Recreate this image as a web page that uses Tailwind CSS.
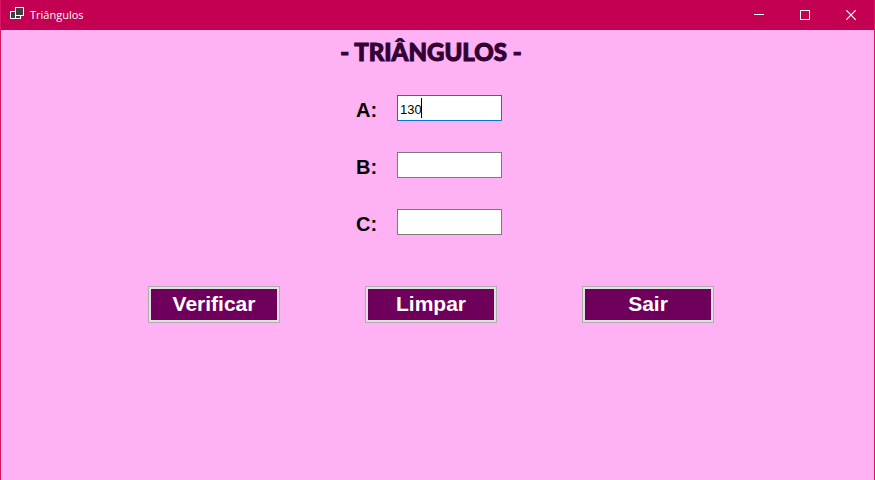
<!DOCTYPE html>
<html lang="pt-BR">
<head>
<meta charset="utf-8">
<meta name="viewport" content="width=device-width, initial-scale=1">
<title>Triângulos</title>
<script src="https://cdn.jsdelivr.net/npm/@tailwindcss/browser@4"></script>
</head>
<body class="flex min-h-screen flex-col border-x border-[#dc1464] bg-[#ffb2f3] font-['Liberation_Sans',Arial,sans-serif] text-black">
  <header class="flex h-[30px] items-center justify-between bg-[#c30052] text-white">
    <div class="flex items-center gap-1.5 pl-[9px]">
      <svg class="h-4 w-[14px]" viewBox="0 0 14 16" shape-rendering="crispEdges" aria-hidden="true">
        <rect x="0.5" y="4.5" width="5" height="7" fill="#404040" stroke="#fff"/>
        <rect x="5.5" y="8.5" width="5" height="3" fill="#404040" stroke="#fff"/>
        <rect x="5.5" y="0.5" width="8" height="8" fill="#404040" stroke="#fff"/>
      </svg>
      <span class="font-['Open_Sans','Noto_Sans',sans-serif] text-[11px] leading-4">Triângulos</span>
    </div>
    <div class="flex h-full">
      <button type="button" aria-label="Minimizar" class="flex w-[46px] items-center justify-center">
        <svg class="h-[11px] w-[10px]" viewBox="0 0 10 11" fill="#fff" shape-rendering="crispEdges"><rect x="0" y="4" width="10" height="1"/></svg>
      </button>
      <button type="button" aria-label="Maximizar" class="flex w-[46px] items-center justify-center">
        <svg class="h-[11px] w-[10px]" viewBox="0 0 10 11" fill="none" stroke="#fff" shape-rendering="crispEdges"><rect x="0.5" y="0.5" width="9" height="9"/></svg>
      </button>
      <button type="button" aria-label="Fechar" class="flex w-[46px] items-center justify-center">
        <svg class="h-[11px] w-[10px]" viewBox="0 0 10 11" fill="none" stroke="#fff" stroke-width="1.2"><path d="M0.2 0.2 9.8 9.8M9.8 0.2 0.2 9.8"/></svg>
      </button>
    </div>
  </header>

  <main class="flex flex-col items-center pr-[13px] pt-[6px]">
    <h1 class="font-['Lato',sans-serif] text-[24px] leading-8 font-black text-[#330033] [-webkit-text-stroke:1px_#330033]">- TRIÂNGULOS -</h1>

    <form class="flex flex-col items-center">
      <div class="flex flex-col gap-[31px] pt-[27px] pr-1">
        <div class="flex items-end">
          <label for="a" class="w-[41px] text-[20px] leading-[22px] font-bold">A:</label>
          <div class="relative flex">
            <input id="a" type="text" value="130" class="h-[26px] w-[105px] border border-[#0078d7] bg-white px-[2px] pt-[2px] font-['Liberation_Sans',sans-serif] text-[13px] leading-5 caret-transparent outline-none">
            <span class="absolute top-[3px] left-6 h-5 w-px bg-black" aria-hidden="true"></span>
          </div>
        </div>
        <div class="flex items-end">
          <label for="b" class="w-[41px] text-[20px] leading-[22px] font-bold">B:</label>
          <input id="b" type="text" class="h-[26px] w-[105px] border border-[#7a7a7a] bg-white px-[2px] text-[13px] outline-none">
        </div>
        <div class="flex items-end">
          <label for="c" class="w-[41px] text-[20px] leading-[22px] font-bold">C:</label>
          <input id="c" type="text" class="h-[26px] w-[105px] border border-[#7a7a7a] bg-white px-[2px] text-[13px] outline-none">
        </div>
      </div>

      <div class="flex gap-[85px] pt-[51px]">
        <button type="button" class="h-[37px] w-[132px] border border-[#adadad] bg-[#e1e1e1] p-[2px] text-[21px] leading-[30px] font-bold text-white"><span class="block h-full bg-[#6e005c]">Verificar</span></button>
        <button type="button" class="h-[37px] w-[132px] border border-[#adadad] bg-[#e1e1e1] p-[2px] text-[21px] leading-[30px] font-bold text-white"><span class="block h-full bg-[#6e005c]">Limpar</span></button>
        <button type="button" class="h-[37px] w-[132px] border border-[#adadad] bg-[#e1e1e1] p-[2px] text-[21px] leading-[30px] font-bold text-white"><span class="block h-full bg-[#6e005c]">Sair</span></button>
      </div>
    </form>
  </main>
</body>
</html>
